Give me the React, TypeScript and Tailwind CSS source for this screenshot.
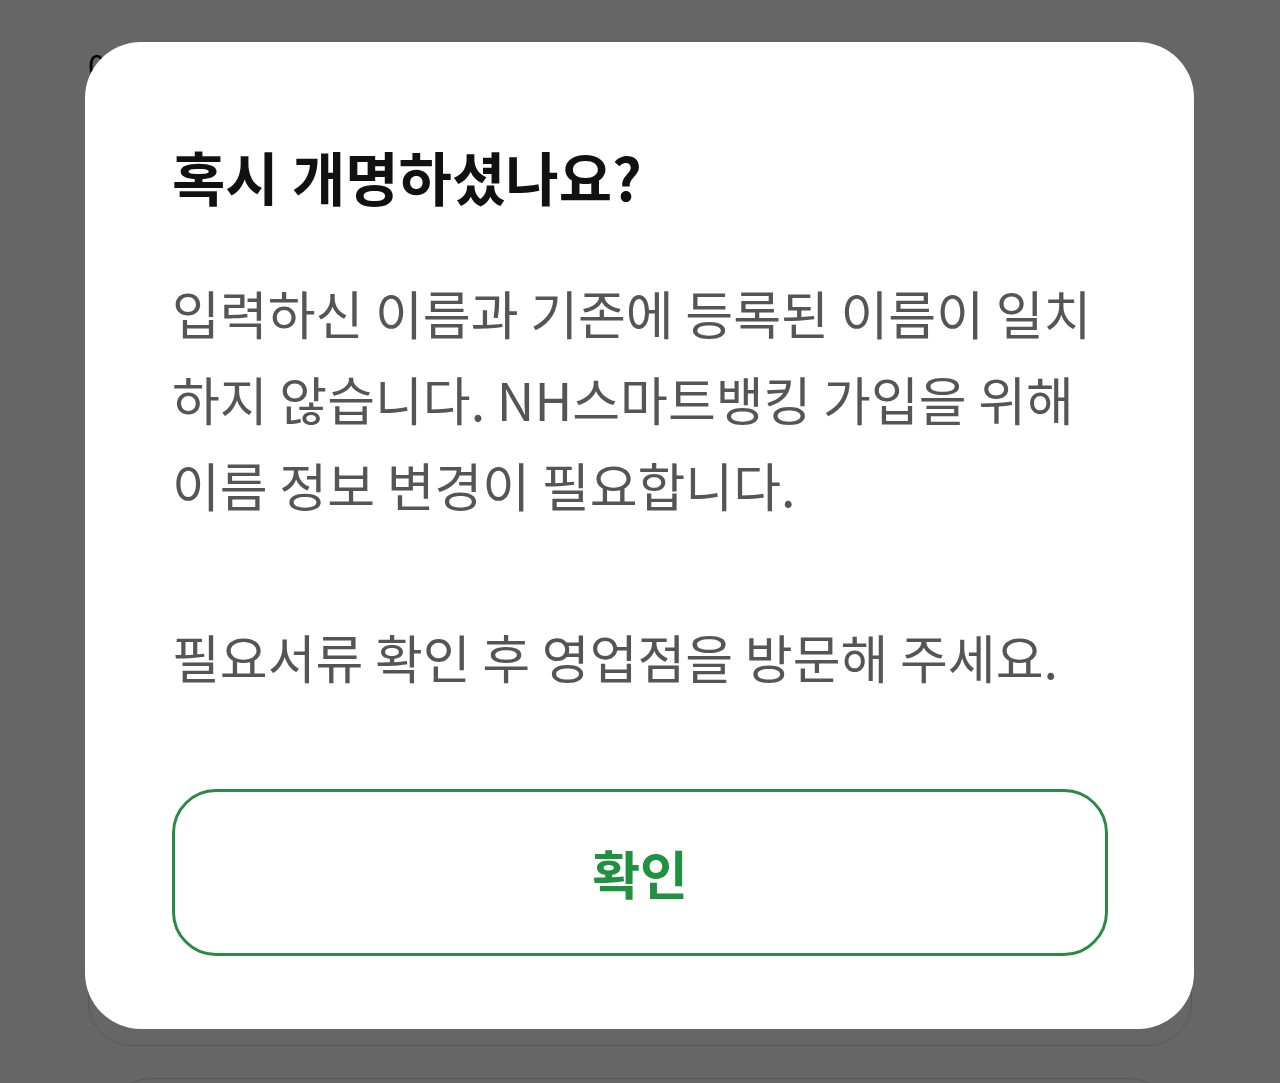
import React from "react";

const font = { fontFamily: '"Noto Sans CJK KR", "Noto Sans", sans-serif' };

const BackgroundPage = () => (
  <div className="flex flex-col px-[88px] pt-[44px]">
    <div className="h-[40px] text-[32px] leading-[40px] text-black">0</div>
    <div className="mt-[60px] h-[902px] rounded-[44px] border border-[#585858]" />
    <div className="mt-[32px] h-[120px] rounded-[44px] border border-[#585858] mx-[18px]" />
  </div>
);

const NameChangeDialog = () => (
  <div className="absolute left-[85px] top-[42px] w-[1109px] rounded-[56px] bg-white pl-[87px] pr-[86px] pt-[102px] pb-[73px]">
    <h2 className="text-[58px] leading-[64px] font-bold text-[#111111]">
      혹시 개명하셨나요?
    </h2>

    <p className="mt-[62px] text-[52px] leading-[86px] text-[#555555]">
      입력하신 이름과 기존에 등록된 이름이 일치
      <br />
      하지 않습니다. NH스마트뱅킹 가입을 위해
      <br />
      이름 정보 변경이 필요합니다.
      <br />
      <br />
      필요서류 확인 후 영업점을 방문해 주세요.
    </p>

    <div className="mt-[88px] h-px bg-[#f6f6f6] -mx-[60px] hidden" />

    <button className="mt-[89px] flex h-[167px] w-full items-center justify-center rounded-[44px] border-[3px] border-[#2b8a46] bg-white">
      <span className="text-[52px] font-bold text-[#1f9140]">확인</span>
    </button>
  </div>
);

export default function App() {
  return (
    <div className="relative h-[1083px] w-[1280px] overflow-hidden bg-[#666666]" style={font}>
      <BackgroundPage />
      <NameChangeDialog />
    </div>
  );
}
